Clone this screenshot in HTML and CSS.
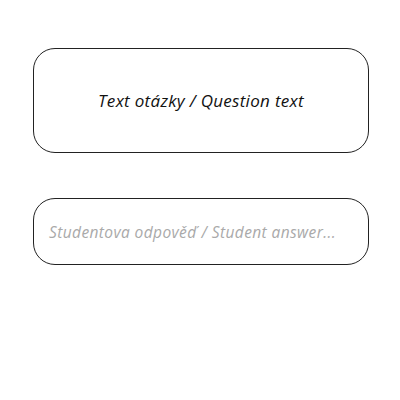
FILE: index.html
```html
<!DOCTYPE html>
<html>
<head>
<meta charset="utf-8">
<link rel="stylesheet" href="styles.css">
</head>
<body>
<main class="quiz">
  <div class="question">Text otázky / Question text</div>
  <div class="answer"><span class="placeholder">Studentova odpověď / Student answer...</span></div>
</main>
</body>
</html>
```
FILE: styles.css
```css
html, body {
  margin: 0;
  padding: 0;
  background: #fff;
}
.quiz {
  display: flex;
  flex-direction: column;
  gap: 45px;
  padding: 48px 0 0 33px;
  width: 336px;
  font-family: "Open Sans", sans-serif;
  font-style: italic;
}
.question {
  box-sizing: border-box;
  height: 105px;
  border: 1px solid #222;
  border-radius: 22px;
  display: flex;
  align-items: center;
  justify-content: center;
  font-size: 17px;
  letter-spacing: 0.3px;
  color: #111;
}
.answer {
  box-sizing: border-box;
  height: 67px;
  border: 1px solid #222;
  border-radius: 22px;
  display: flex;
  align-items: center;
  padding-left: 15px;
  font-size: 15.5px;
  letter-spacing: 0.4px;
}
.placeholder {
  color: #a9a9a9;
}
```
